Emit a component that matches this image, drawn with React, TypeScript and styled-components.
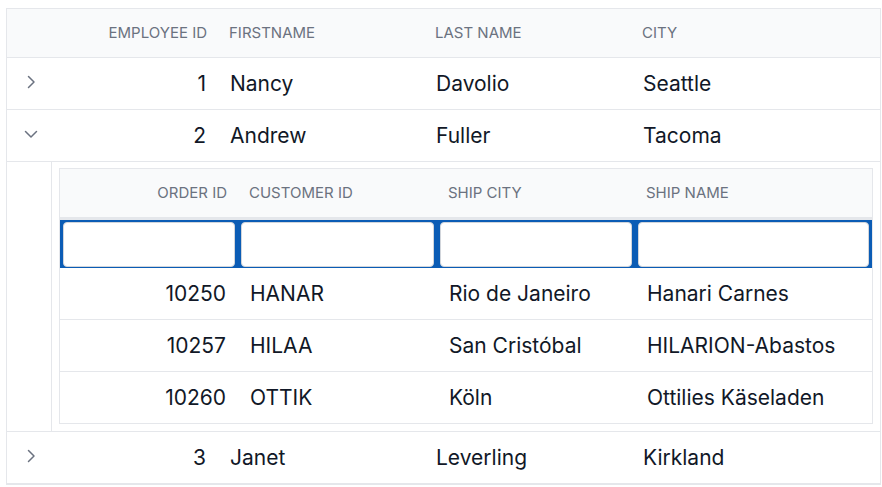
import React from "react";
import styled, { createGlobalStyle } from "styled-components";

const Global = createGlobalStyle`
  html, body { margin: 0; padding: 0; background: #ffffff; }
  body { font-family: Inter, "Noto Sans", sans-serif; color: #111827; }
  * { box-sizing: border-box; }
`;

const Page = styled.div`
  padding: 8px 1px 0 6px;
`;

const OUTER_COLS = "44px 167px 206px 207px 1fr";
const INNER_COLS = "178px 199px 198px 1fr";

const Grid = styled.div`
  border: 1px solid #e5e7eb;
  background: #fff;
`;

const Row = styled.div<{ $cols: string; $h?: number; $last?: boolean }>`
  display: grid;
  grid-template-columns: ${(p) => p.$cols};
  height: ${(p) => (p.$h ?? 51) + (p.$last ? 0 : 1)}px;
  border-bottom: ${(p) => (p.$last ? "none" : "1px solid #e5e7eb")};
`;

const HeaderRow = styled(Row)`
  background: #f9fafb;
`;

const HeadCell = styled.div<{ $right?: boolean }>`
  display: flex;
  align-items: center;
  justify-content: ${(p) => (p.$right ? "flex-end" : "flex-start")};
  padding: 0 ${(p) => (p.$right ? 11 : 0)}px 1px ${(p) => (p.$right ? 0 : 11)}px;
  font-size: 15px;
  font-weight: 400;
  color: #6b7280;
  text-transform: uppercase;
  white-space: nowrap;
`;

const Cell = styled.div<{ $right?: boolean }>`
  display: flex;
  align-items: center;
  justify-content: ${(p) => (p.$right ? "flex-end" : "flex-start")};
  padding: 0 ${(p) => (p.$right ? 12 : 0)}px 0 ${(p) => (p.$right ? 0 : 12)}px;
  font-size: 21px;
  font-weight: 400;
  color: #111827;
  white-space: nowrap;
`;

const ExpandCell = styled.div`
  display: flex;
  align-items: center;
  justify-content: center;
  padding: 0 0 3px 3px;
`;

const DetailRow = styled.div`
  display: grid;
  grid-template-columns: 44px 1fr;
  border-bottom: 1px solid #e5e7eb;
`;

const DetailCell = styled.div`
  border-left: 1px solid #e5e7eb;
  padding: 6px 7px 7px 7px;
`;

const FilterRow = styled.div`
  display: grid;
  grid-template-columns: ${INNER_COLS};
  border-top: 2px solid #e5e7eb;
  background: #0b5cb5;
  height: 50px;
  padding: 2px 0 1px 0;
`;

const FilterCell = styled.div`
  padding: 0 3px;
  display: flex;
`;

const FilterInput = styled.div`
  flex: 1;
  background: #fff;
  border: 1px solid #d1d5db;
  border-radius: 4px;
`;

const Chevron = ({ open }: { open?: boolean }) => (
  <svg width="18" height="18" viewBox="0 0 18 18" fill="none">
    {open ? (
      <path d="M3.5 6.5 L9 12 L14.5 6.5" stroke="#6b7280" strokeWidth="1.5" strokeLinecap="round" strokeLinejoin="round" />
    ) : (
      <path d="M6.5 3.5 L12 9 L6.5 14.5" stroke="#6b7280" strokeWidth="1.5" strokeLinecap="round" strokeLinejoin="round" />
    )}
  </svg>
);

const employees = [
  { id: 1, first: "Nancy", last: "Davolio", city: "Seattle" },
  { id: 2, first: "Andrew", last: "Fuller", city: "Tacoma", open: true },
  { id: 3, first: "Janet", last: "Leverling", city: "Kirkland" },
];

const orders = [
  { id: 10250, cust: "HANAR", city: "Rio de Janeiro", name: "Hanari Carnes" },
  { id: 10257, cust: "HILAA", city: "San Cristóbal", name: "HILARION-Abastos" },
  { id: 10260, cust: "OTTIK", city: "Köln", name: "Ottilies Käseladen" },
];

const OrdersGrid = () => (
  <Grid>
    <HeaderRow $cols={INNER_COLS} $h={48}>
      <HeadCell $right>Order ID</HeadCell>
      <HeadCell>Customer ID</HeadCell>
      <HeadCell>Ship City</HeadCell>
      <HeadCell>Ship Name</HeadCell>
    </HeaderRow>
    <FilterRow>
      {[0, 1, 2, 3].map((i) => (
        <FilterCell key={i}>
          <FilterInput />
        </FilterCell>
      ))}
    </FilterRow>
    {orders.map((o, i) => (
      <Row key={o.id} $cols={INNER_COLS} $last={i === orders.length - 1}>
        <Cell $right>{o.id}</Cell>
        <Cell>{o.cust}</Cell>
        <Cell>{o.city}</Cell>
        <Cell>{o.name}</Cell>
      </Row>
    ))}
  </Grid>
);

export default function App() {
  return (
    <Page>
      <Global />
      <Grid>
        <HeaderRow $cols={OUTER_COLS} $h={48}>
          <div />
          <HeadCell $right>Employee ID</HeadCell>
          <HeadCell>FirstName</HeadCell>
          <HeadCell>Last Name</HeadCell>
          <HeadCell>City</HeadCell>
        </HeaderRow>
        {employees.map((e) => (
          <React.Fragment key={e.id}>
            <Row $cols={OUTER_COLS}>
              <ExpandCell>
                <Chevron open={e.open} />
              </ExpandCell>
              <Cell $right>{e.id}</Cell>
              <Cell>{e.first}</Cell>
              <Cell>{e.last}</Cell>
              <Cell>{e.city}</Cell>
            </Row>
            {e.open && (
              <DetailRow>
                <div />
                <DetailCell>
                  <OrdersGrid />
                </DetailCell>
              </DetailRow>
            )}
          </React.Fragment>
        ))}
      </Grid>
    </Page>
  );
}
